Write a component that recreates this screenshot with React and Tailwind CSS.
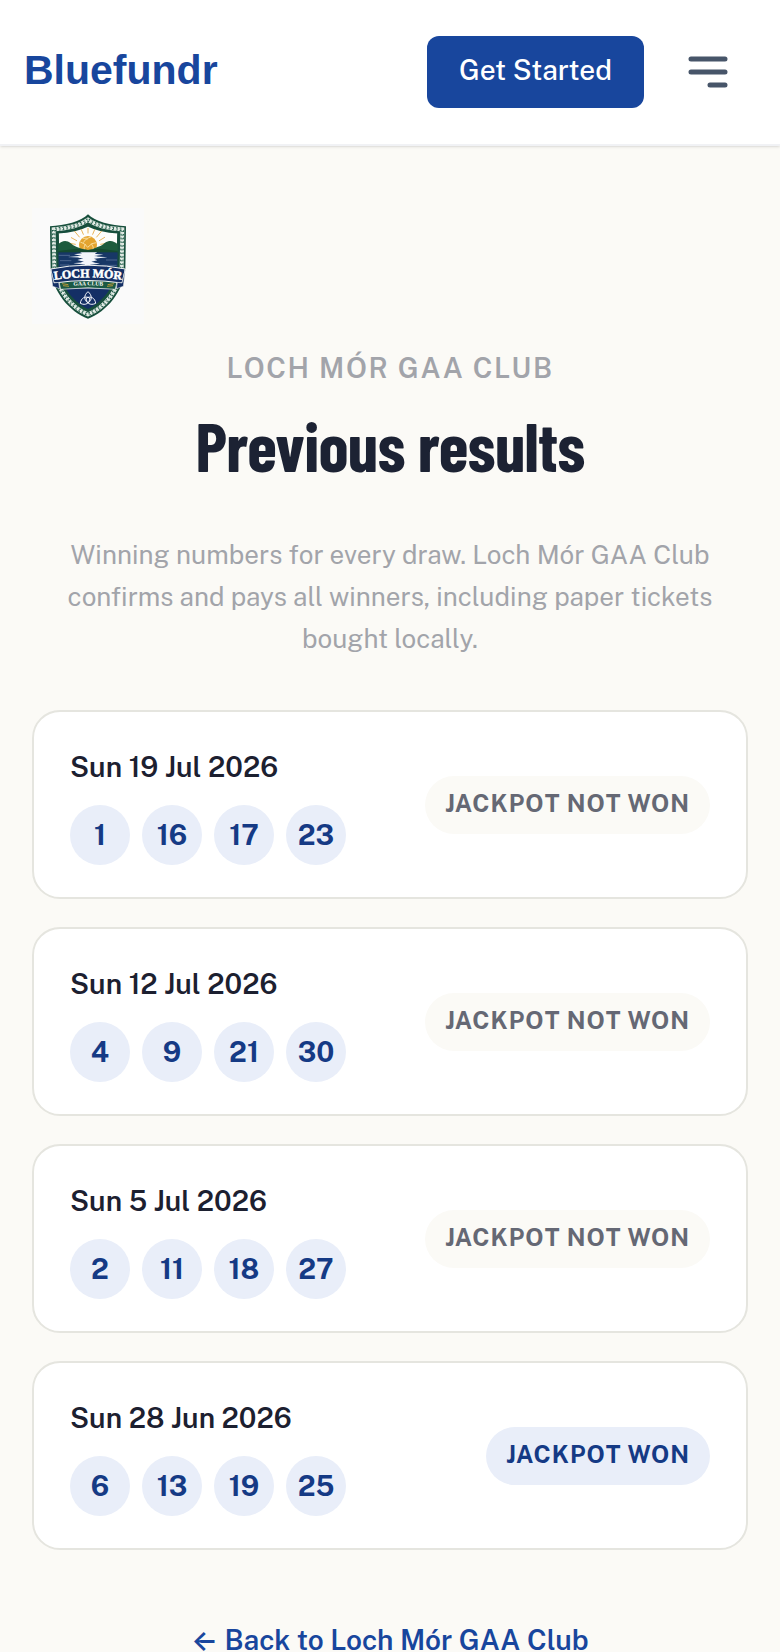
import React from 'react';

const draws = [
  { date: 'Sun 19 Jul 2026', numbers: [1, 16, 17, 23], won: false },
  { date: 'Sun 12 Jul 2026', numbers: [4, 9, 21, 30], won: false },
  { date: 'Sun 5 Jul 2026', numbers: [2, 11, 18, 27], won: false },
  { date: 'Sun 28 Jun 2026', numbers: [6, 13, 19, 25], won: true },
];

const SHIELD = 'M204 58 C184 80 134 92 90 94 L92 222 C98 290 148 350 204 371 C260 350 310 290 316 222 L318 94 C274 92 224 80 204 58 Z';
const BRAID = 'M204 74 C182 91 140 101 101 103 L103 222 C110 284 154 338 204 358 C254 338 298 284 305 222 L307 103 C268 101 226 91 204 74 Z';
const INNER = 'M204 92 C180 104 146 111 114 113 L116 222 C124 278 162 322 204 342 C246 322 284 278 292 222 L294 113 C262 111 228 104 204 92 Z';

function ClubCrest() {
  return (
    <svg viewBox="36 39 336 348" className="h-[116px] w-28" role="img" aria-label="Loch Mór GAA Club">
      <defs>
        <clipPath id="crest-inner">
          <path d={INNER} />
        </clipPath>
        <path id="crest-name" d="M98 255 Q204 239 310 255" />
        <path id="crest-sub" d="M140 274 Q204 268 270 274" />
      </defs>
      <rect x="36" y="39" width="336" height="348" fill="#fafafa" />
      <path d={SHIELD} fill="#174f3c" />

      {/* knotwork border */}
      <path d={BRAID} fill="none" stroke="#dfe8e2" strokeWidth="12" />
      <path d={BRAID} fill="none" stroke="#1b5945" strokeWidth="10" strokeDasharray="5 6" />
      <path d={BRAID} fill="none" stroke="#eef3ef" strokeWidth="4" strokeDasharray="7 4" />
      <path d={BRAID} fill="none" stroke="#1b5945" strokeWidth="3" strokeDasharray="3 8" />
      <path d={INNER} fill="#fdfdfb" stroke="#174f3c" strokeWidth="5" />

      <g clipPath="url(#crest-inner)">
        {/* sun */}
        <g stroke="#e5a63a" strokeWidth="2.5" strokeLinecap="round">
          <path d="M204 114 V100 M190 118 L184 104 M218 118 L224 104 M178 126 L164 109 M230 126 L245 108 M170 137 L154 128 M238 137 L254 127 M166 148 L149 145 M242 148 L259 145" />
        </g>
        <circle cx="204" cy="150" r="27" fill="#e4a42f" />
        <path d="M181 141 Q196 145 203 157 M188 130 Q204 132 215 125 M203 157 Q215 142 229 143 M190 143 Q195 132 204 131 M214 146 Q222 156 220 166 M196 147 Q190 157 193 165" fill="none" stroke="#fae5a9" strokeWidth="2.5" />
        {/* hills */}
        <path d="M112 151 C124 136 140 134 152 145 C162 154 174 158 190 163 L204 165 L218 163 C232 154 242 156 254 144 C270 134 282 138 296 150 V174 H112 Z" fill="#1d5b3d" />
        <path d="M112 168 L170 161 L204 165 L240 161 L296 168 V175 H112 Z" fill="#15492f" />
        {/* lake */}
        <rect x="110" y="172" width="190" height="60" fill="#173766" />
        <path d="M180 172 H232 L224 176 L250 179 L222 183 L262 187 L222 191 L232 196 L214 200 L240 206 L210 209 L222 214 H184 L196 209 L160 205 L192 200 L172 195 L190 190 L144 186 L184 182 L162 178 L186 175 Z" fill="#f2f5fa" />
        <path d="M116 181 H150 M258 195 H292 M120 197 H154 M245 211 H290 M120 210 H148" stroke="#6881a5" strokeWidth="2" />
        <path d="M150 188 H176 M232 184 H258 M160 203 H184 M224 203 H244" stroke="#173766" strokeWidth="1.5" />
        <rect x="110" y="280" width="190" height="80" fill="#142f65" />
      </g>

      {/* ribbons */}
      <path d="M116 257 Q204 247 292 257 L286 283 Q204 274 122 283 Z" fill="#1b5945" stroke="#f4f6f3" strokeWidth="2" />
      <path d="M92 222 Q204 199 316 222 L306 264 Q204 249 102 264 Z" fill="#142f65" stroke="#f4f6f3" strokeWidth="3" />
      <path d="M92 222 L98 274 L119 281 L116 262 L102 264 Z M316 222 L310 274 L289 281 L292 262 L306 264 Z" fill="#142f65" stroke="#f4f6f3" strokeWidth="1.5" />
      <text fill="#ffffff" stroke="#ffffff" strokeWidth="1.5" fontSize="36" className="font-['Liberation_Serif'] font-bold" textAnchor="middle">
        <textPath href="#crest-name" startOffset="50%">LOCH MÓR</textPath>
      </text>
      <text fill="#ffffff" fontSize="17" className="font-['Liberation_Serif'] font-bold" textAnchor="middle">
        <textPath href="#crest-sub" startOffset="50%">GAA CLUB</textPath>
      </text>
      <path d="M126 266 L145 269 M129 272 L147 274 M282 266 L263 269 M279 272 L261 274" stroke="#d5a336" strokeWidth="2.5" />

      {/* triquetra */}
      <g fill="none" stroke="#f4f6fb" strokeWidth="3">
        <path d="M204 290 C191 301 191 315 204 324 C217 315 217 301 204 290 Z" />
        <path d="M181 325 C183 309 195 302 209 309 C210 324 197 333 181 325 Z" />
        <path d="M227 325 C225 309 213 302 199 309 C198 324 211 333 227 325 Z" />
      </g>
    </svg>
  );
}

function Header() {
  return (
    <header className="relative flex h-[146px] items-center justify-between border-b-2 border-[#f1f2f5] bg-white pr-[52px] pl-6 shadow">
      <a href="#" className="pb-1 font-['Liberation_Sans',sans-serif] text-[41px] leading-[48px] font-bold text-[#18469d]">
        Bluefundr
      </a>
      <div className="flex items-center gap-11">
        <a href="#" className="flex h-[72px] items-center rounded-xl bg-[#18469d] px-8 pb-1 text-[28px] font-medium text-white">
          Get Started
        </a>
        <button type="button" aria-label="Open menu" className="text-[#475569]">
          <svg viewBox="0 0 40 40" className="size-10" fill="none" stroke="currentColor" strokeWidth="5" strokeLinecap="round">
            <path d="M3 7 H37 M3 20 H37 M22 33 H37" />
          </svg>
        </button>
      </div>
    </header>
  );
}

function DrawCard({ draw }) {
  return (
    <li className="flex items-center justify-between rounded-[28px] border-2 border-[#e5e5df] bg-white px-9 py-8">
      <div>
        <p className="text-[28px] leading-[45px] font-semibold text-[#1c2030]">{draw.date}</p>
        <ul className="mt-4 flex gap-3">
          {draw.numbers.map((n) => (
            <li key={n} className="flex size-[60px] items-center justify-center rounded-full bg-[#e9eef9] text-[28px] font-bold text-[#153a85]">
              {n}
            </li>
          ))}
        </ul>
      </div>
      {draw.won ? (
        <span className="rounded-full bg-[#e9eef9] px-5 pt-2 pb-3 text-[24px] leading-[38px] font-bold tracking-[0.04em] text-[#153a85]">JACKPOT WON</span>
      ) : (
        <span className="rounded-full bg-[#fbfaf6] px-5 pt-2 pb-3 text-[24px] leading-[38px] font-bold tracking-[0.04em] text-[#656874]">JACKPOT NOT WON</span>
      )}
    </li>
  );
}

export default function App() {
  return (
    <div className="min-h-screen bg-[#fbfaf6] font-['Public_Sans',Inter,sans-serif]">
      <Header />
      <main className="px-8 pt-[62px]">
        <ClubCrest />
        <div className="text-center">
          <p className="mt-[22px] text-[28px] leading-[44px] font-semibold tracking-[0.06em] text-[#a2a4aa]">LOCH MÓR GAA CLUB</p>
          <h1 className="mt-4 font-['Barlow_Condensed','Roboto_Condensed','Liberation_Sans_Narrow',sans-serif] text-[68px] leading-[78px] font-bold tracking-[-0.01em] text-[#1c2233]">
            Previous results
          </h1>
          <p className="mx-auto mt-[50px] max-w-[660px] text-[26px] leading-[42px] text-[#a2a4aa]">
            Winning numbers for every draw. Loch Mór GAA Club confirms and pays all winners, including paper tickets bought locally.
          </p>
        </div>
        <ul className="mt-[50px] flex flex-col gap-7">
          {draws.map((draw) => (
            <DrawCard key={draw.date} draw={draw} />
          ))}
        </ul>
        <div className="mt-[68px] text-center">
          <a href="#" className="text-[28px] leading-[44px] font-semibold text-[#18469d]">← Back to Loch Mór GAA Club</a>
        </div>
      </main>
    </div>
  );
}
